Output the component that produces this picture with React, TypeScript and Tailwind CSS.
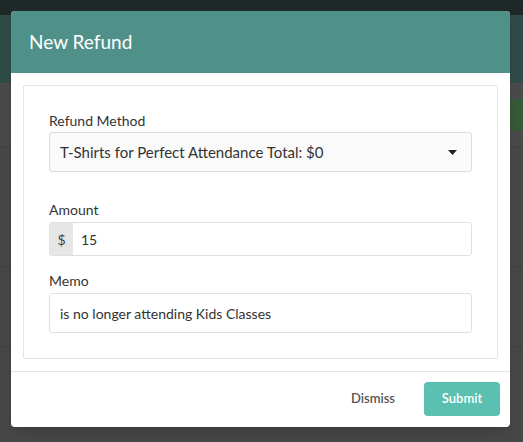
import { useState } from "react";

export default function App() {
  const [amount, setAmount] = useState("15");
  const [memo, setMemo] = useState("is no longer attending Kids Classes");

  return (
    <div
      className="relative h-[442px] w-[523px] overflow-hidden bg-[#474747]"
      style={{ fontFamily: "Lato, 'Open Sans', sans-serif" }}
    >
      {/* dimmed page behind the modal */}
      <div className="h-[15px] bg-[#1e2927]" />
      <div className="h-[68px] bg-[#2f4b47]" />
      <div className="flex h-[64px] items-center justify-end border-b border-[#404040] bg-[#4a4a4a]">
        <span className="h-[32px] w-[20px] bg-[#355a38]" />
      </div>
      <div className="h-[120px] border-b border-[#404040]" />
      <div className="h-[80px] border-b border-[#404040]" />

      {/* modal */}
      <div className="absolute left-[11px] top-[11px] w-[499px] overflow-hidden rounded-[4px] bg-white shadow-lg">
        <div className="flex h-[62px] items-center bg-[#4f9189] px-[18px]">
          <h2 className="text-[19px] font-normal text-white">New Refund</h2>
        </div>
        <div className="p-[12px]">
          <div className="rounded-[2px] border border-[#e6e6e6] px-[25px] pb-[25px] pt-[25px]">
            <label className="mb-[1px] block text-[14px] leading-[20px] text-[#333]">Refund Method</label>
            <div className="flex h-[40px] items-center justify-between rounded-[3px] border border-[#dcdcdc] bg-[#fafafa] pl-[10px] pr-[14px] text-[15px] text-[#333]">
              <span>T-Shirts for Perfect Attendance Total: $0</span>
              <svg width="9" height="5" viewBox="0 0 9 5">
                <path d="M0 0h9L4.5 5z" fill="#222" />
              </svg>
            </div>

            <label className="mb-[2px] mt-[28px] block text-[14px] leading-[20px] text-[#333]">Amount</label>
            <div className="flex h-[34px] overflow-hidden rounded-[3px] border border-[#e0e0e0]">
              <span className="flex w-[23px] items-center justify-center bg-[#e6e6e6] text-[14px] text-[#444]">$</span>
              <input
                className="flex-1 bg-white px-[8px] text-[14px] text-[#333] outline-none"
                value={amount}
                onChange={(e) => setAmount(e.target.value)}
              />
            </div>

            <label className="mb-[2px] mt-[15px] block text-[14px] leading-[20px] text-[#333]">Memo</label>
            <input
              className="block h-[40px] w-full rounded-[3px] border border-[#e0e0e0] bg-white px-[10px] text-[14px] text-[#333] outline-none"
              value={memo}
              onChange={(e) => setMemo(e.target.value)}
            />
          </div>
        </div>
        <div className="flex items-center justify-end gap-[29px] border-t border-[#e5e5e5] pb-[11px] pl-[12px] pr-[10px] pt-[10px]">
          <button className="text-[13px] font-semibold text-[#555]">Dismiss</button>
          <button className="h-[34px] w-[76px] rounded-[4px] bg-[#5bbfb1] text-[13px] font-semibold text-white">Submit</button>
        </div>
      </div>
    </div>
  );
}
